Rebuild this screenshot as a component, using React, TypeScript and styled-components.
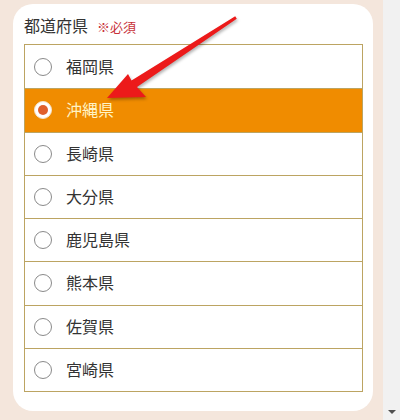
import React from "react";
import styled, { createGlobalStyle } from "styled-components";

const GlobalStyle = createGlobalStyle`
  html, body { margin: 0; padding: 0; }
  body {
    font-family: "Noto Sans CJK JP", "Noto Sans", sans-serif;
    overflow: hidden;
  }
`;

const Page = styled.div`
  position: relative;
  display: flex;
  width: 400px;
  height: 420px;
`;

const Main = styled.main`
  flex: 1;
  background: #f4e6dc;
  padding: 4px 10px 0 13px;
`;

const Scrollbar = styled.div`
  width: 17px;
  background: #f1f1f1;
  display: flex;
  flex-direction: column;
  justify-content: flex-end;
  align-items: center;
  padding-bottom: 6px;
  box-sizing: border-box;
`;

const DownArrow = styled.span`
  width: 0;
  height: 0;
  border-left: 4px solid transparent;
  border-right: 4px solid transparent;
  border-top: 4px solid #505050;
`;

const Card = styled.section`
  background: #fff;
  border-radius: 20px;
  padding: 9px 10px 20px 11px;
  box-sizing: border-box;
  height: 407px;
`;

const Label = styled.div`
  display: flex;
  align-items: baseline;
  gap: 9px;
  height: 24px;
  line-height: 24px;
  font-size: 16px;
  color: #333;
  margin-bottom: 7px;
`;

const Required = styled.span`
  font-size: 13px;
  color: #c8323a;
`;

const OptionList = styled.div`
  border: 1px solid #bca462;
  display: flex;
  flex-direction: column;
`;

const Option = styled.label<{ $selected?: boolean }>`
  display: flex;
  align-items: center;
  gap: 14px;
  height: 43.25px;
  box-sizing: border-box;
  padding: 0 0 2px 9px;
  font-size: 16px;
  color: ${(p) => (p.$selected ? "#fff3c4" : "#333")};
  background: ${(p) => (p.$selected ? "#f08c00" : "#fff")};
  & + & {
    border-top: 1px solid #bca462;
  }
`;

const Radio = styled.span<{ $selected?: boolean }>`
  width: 18px;
  height: 18px;
  box-sizing: border-box;
  border-radius: 50%;
  border: 1px solid ${(p) => (p.$selected ? "#f6e2c8" : "#8a8a8a")};
  background: #fff;
  display: flex;
  align-items: center;
  justify-content: center;
  flex-shrink: 0;
  margin-top: 2px;
  &::after {
    content: "";
    width: 10px;
    height: 10px;
    border-radius: 50%;
    background: ${(p) => (p.$selected ? "#e0602c" : "transparent")};
  }
`;

const ArrowOverlay = styled.svg`
  position: absolute;
  top: 0;
  left: 0;
  width: 400px;
  height: 420px;
  pointer-events: none;
  filter: drop-shadow(1px 2px 1.5px rgba(0, 0, 0, 0.3));
`;

const prefectures = ["福岡県", "沖縄県", "長崎県", "大分県", "鹿児島県", "熊本県", "佐賀県", "宮崎県"];
const selected = "沖縄県";

export default function App() {
  return (
    <>
      <GlobalStyle />
      <Page>
        <Main>
          <Card>
            <Label>
              都道府県<Required>※必須</Required>
            </Label>
            <OptionList>
              {prefectures.map((name) => (
                <Option key={name} $selected={name === selected}>
                  <Radio $selected={name === selected} />
                  {name}
                </Option>
              ))}
            </OptionList>
          </Card>
        </Main>
        <Scrollbar>
          <DownArrow />
        </Scrollbar>
        <ArrowOverlay viewBox="0 0 400 420">
          <polygon
            points="235.2,16.2 131.5,80.5 128,74 107,98 146,97 137,87 236.8,18.8"
            fill="#ec1a1a"
          />
        </ArrowOverlay>
      </Page>
    </>
  );
}
